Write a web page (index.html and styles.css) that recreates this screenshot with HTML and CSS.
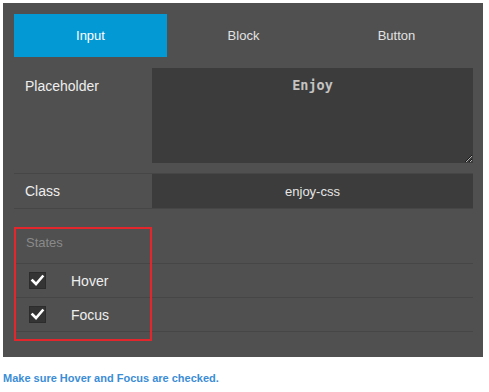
FILE: index.html
```html
<!DOCTYPE html>
<html lang="en">

<head>
    <meta charset="UTF-8">
    <meta name="viewport" content="width=device-width, initial-scale=1.0">
    <title>enjoy-css input</title>
    <link rel="stylesheet" href="styles.css">
</head>

<body>
    <div class="panel">
        <!-- Tabs -->
        <div class="tabs">
            <div class="tab active">Input</div>
            <div class="tab">Block</div>
            <div class="tab">Button</div>
        </div>

        <!-- Fields -->
        <div class="row row-tall">
            <label class="label">Placeholder</label>
            <textarea class="field field-area" readonly>Enjoy</textarea>
        </div>
        <div class="row">
            <label class="label">Class</label>
            <input class="field field-line" type="text" value="enjoy-css" readonly />
        </div>

        <!-- States -->
        <div class="states">
            <div class="states-head">States</div>
            <div class="check-row">
                <span class="check">
                    <svg width="17" height="17" viewBox="0 0 17 17"><path d="M3.5 8.5 L7 12 L13.5 4.5" fill="none" stroke="#fff" stroke-width="2.6" stroke-linecap="square" /></svg>
                </span>
                <span>Hover</span>
            </div>
            <div class="check-row">
                <span class="check">
                    <svg width="17" height="17" viewBox="0 0 17 17"><path d="M3.5 8.5 L7 12 L13.5 4.5" fill="none" stroke="#fff" stroke-width="2.6" stroke-linecap="square" /></svg>
                </span>
                <span>Focus</span>
            </div>
            <div class="highlight"></div>
        </div>
    </div>

    <p class="note">Make sure Hover and Focus are checked.</p>
</body>

</html>
```

FILE: styles.css
```css
/* Basic Styles */
body {
    font-family: "Liberation Sans", Arial, sans-serif;
    background-color: #fff;
    margin: 0;
    padding: 0;
}

.panel {
    box-sizing: border-box;
    width: 480px;
    height: 354px;
    margin: 3px 0 0 3px;
    padding: 11px 10px 0 11px;
    background-color: #505050;
}

/* Tabs */
.tabs {
    display: flex;
    height: 43px;
}

.tab {
    flex: 1;
    display: flex;
    align-items: center;
    justify-content: center;
    font-size: 13px;
    color: #e2e2e2;
}

.tab.active {
    background-color: #0399d5;
    color: #fff;
}

/* Field rows */
.row {
    display: flex;
    align-items: center;
    border-bottom: 1px solid #464646;
}

.row-tall {
    align-items: flex-start;
    padding: 11px 0 10px;
}

.label {
    width: 138px;
    box-sizing: border-box;
    padding-left: 11px;
    font-size: 14px;
    line-height: 16px;
    color: #eee;
}

.row-tall .label {
    padding-top: 10px;
}

.field {
    flex: 1;
    box-sizing: border-box;
    margin: 0;
    border: none;
    outline: none;
    background-color: #3c3c3c;
    text-align: center;
}

.field-area {
    height: 95px;
    padding: 9px 10px 0;
    font-family: "DejaVu Sans Mono", monospace;
    font-weight: bold;
    font-size: 13.5px;
    line-height: 16px;
    color: #c4c4c4;
    resize: both;
}

.field-line {
    height: 34px;
    padding: 0 10px;
    font-family: "Liberation Sans", Arial, sans-serif;
    font-size: 13px;
    color: #e6e6e6;
}

/* States */
.states {
    position: relative;
}

.states-head {
    box-sizing: border-box;
    height: 55px;
    padding: 26px 0 0 12px;
    font-size: 13px;
    line-height: 16px;
    color: #8a8a8a;
    border-bottom: 1px solid #464646;
}

.check-row {
    box-sizing: border-box;
    height: 34px;
    display: flex;
    align-items: center;
    gap: 25px;
    padding-left: 15px;
    font-size: 14px;
    color: #eee;
    border-bottom: 1px solid #464646;
}

.check {
    display: block;
    width: 17px;
    height: 17px;
    background-color: #343434;
    box-shadow: inset 0 0 0 1px #2c2c2c;
}

.check svg {
    display: block;
}

.highlight {
    position: absolute;
    left: 0;
    top: 18px;
    width: 138px;
    height: 114px;
    box-sizing: border-box;
    border: 2px solid #e3262b;
}

.note {
    margin: 14px 0 0 3px;
    font-size: 11px;
    line-height: 14px;
    font-weight: bold;
    color: #3b8dd6;
}
```
